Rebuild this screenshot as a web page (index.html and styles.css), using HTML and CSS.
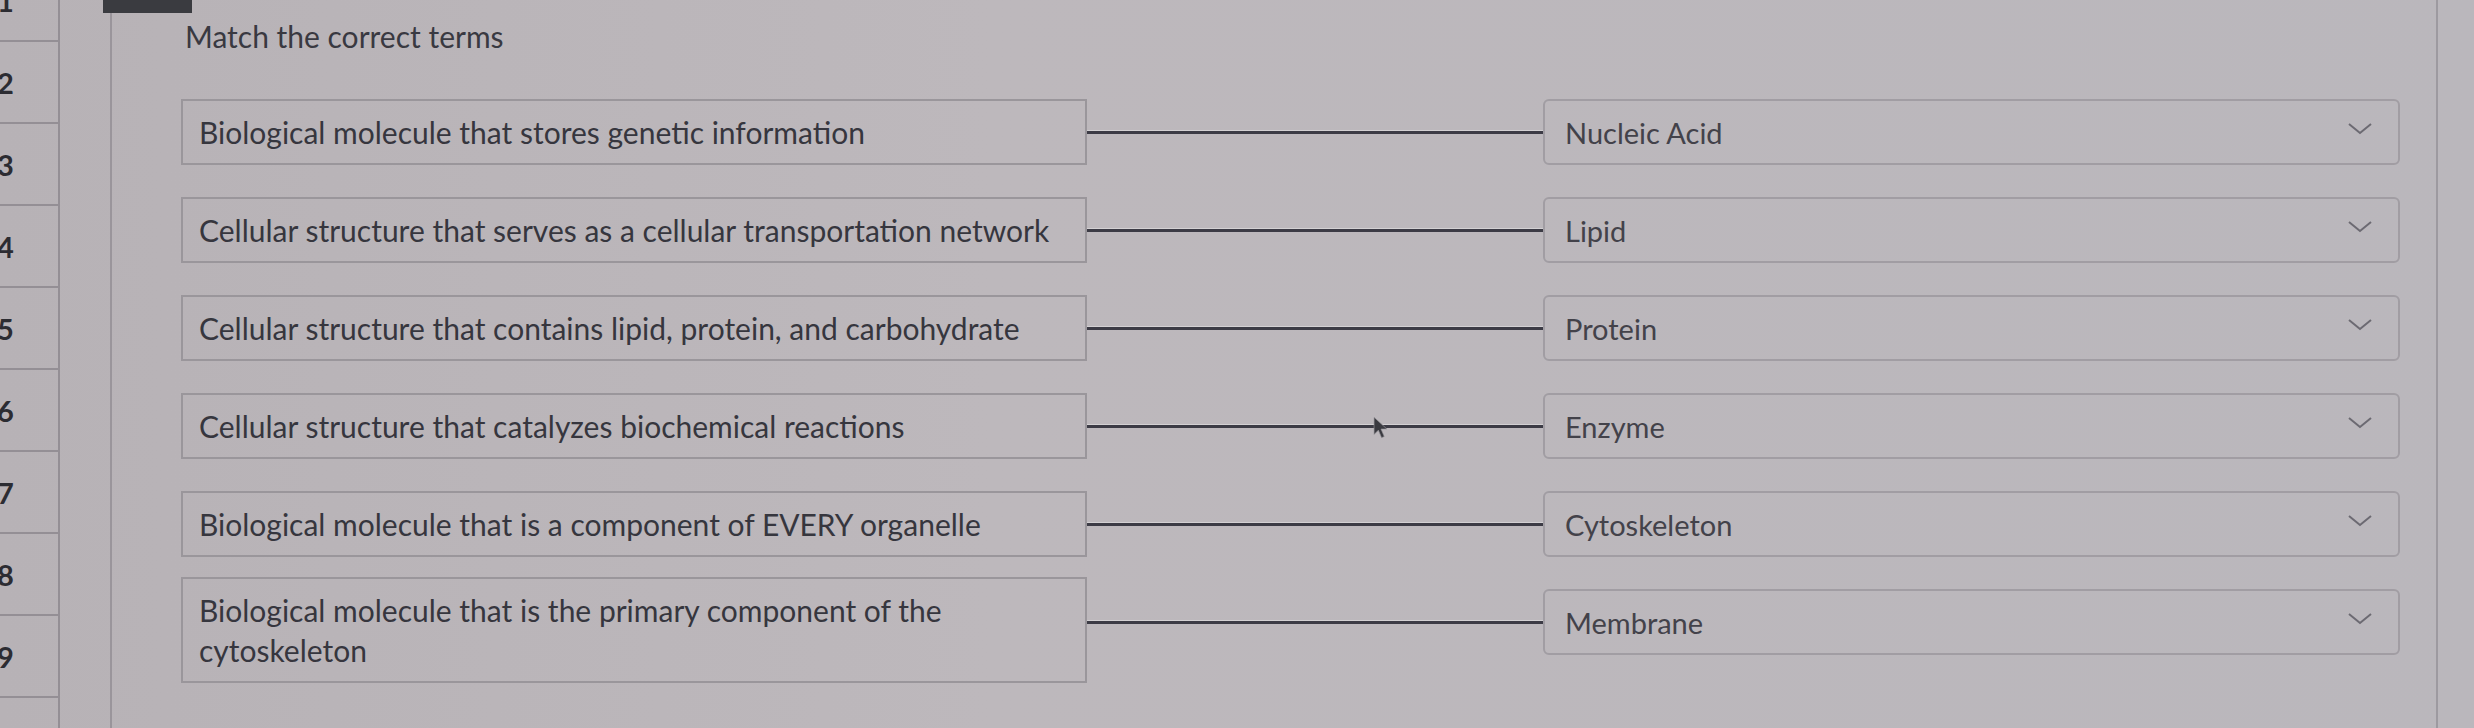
FILE: index.html
```html
<!DOCTYPE html>
<html lang="en">
<head>
    <meta charset="UTF-8">
    <meta name="viewport" content="width=device-width, initial-scale=1.0">
    <title>Match the correct terms</title>
    <link rel="stylesheet" href="styles.css">
</head>
<body>
    <div class="page">
        <!-- question navigator -->
        <div class="qnav">
            <div class="qnav-item">1</div>
            <div class="qnav-item">2</div>
            <div class="qnav-item">3</div>
            <div class="qnav-item">4</div>
            <div class="qnav-item">5</div>
            <div class="qnav-item">6</div>
            <div class="qnav-item">7</div>
            <div class="qnav-item">8</div>
            <div class="qnav-item">9</div>
            <div class="qnav-item"></div>
        </div>
        <div class="gutter"></div>

        <div class="panel">
            <div class="tab-bar"></div>
            <div class="question-title">Match the correct terms</div>

            <div class="match-list">
                <div class="match-row">
                    <div class="prompt">Biological molecule that stores genetic information</div>
                    <div class="connector"></div>
                    <div class="answer">
                        <span>Nucleic Acid</span>
                        <svg class="chevron" viewBox="0 0 24 12"><path d="M1 1 L12 10 L23 1"/></svg>
                    </div>
                </div>
                <div class="match-row">
                    <div class="prompt">Cellular structure that serves as a cellular transportation network</div>
                    <div class="connector"></div>
                    <div class="answer">
                        <span>Lipid</span>
                        <svg class="chevron" viewBox="0 0 24 12"><path d="M1 1 L12 10 L23 1"/></svg>
                    </div>
                </div>
                <div class="match-row">
                    <div class="prompt">Cellular structure that contains lipid, protein, and carbohydrate</div>
                    <div class="connector"></div>
                    <div class="answer">
                        <span>Protein</span>
                        <svg class="chevron" viewBox="0 0 24 12"><path d="M1 1 L12 10 L23 1"/></svg>
                    </div>
                </div>
                <div class="match-row">
                    <div class="prompt">Cellular structure that catalyzes biochemical reactions</div>
                    <div class="connector"></div>
                    <div class="answer">
                        <span>Enzyme</span>
                        <svg class="chevron" viewBox="0 0 24 12"><path d="M1 1 L12 10 L23 1"/></svg>
                    </div>
                </div>
                <div class="match-row">
                    <div class="prompt">Biological molecule that is a component of EVERY organelle</div>
                    <div class="connector"></div>
                    <div class="answer">
                        <span>Cytoskeleton</span>
                        <svg class="chevron" viewBox="0 0 24 12"><path d="M1 1 L12 10 L23 1"/></svg>
                    </div>
                </div>
                <div class="match-row">
                    <div class="prompt">Biological molecule that is the primary component of the cytoskeleton</div>
                    <div class="connector"></div>
                    <div class="answer">
                        <span>Membrane</span>
                        <svg class="chevron" viewBox="0 0 24 12"><path d="M1 1 L12 10 L23 1"/></svg>
                    </div>
                </div>
            </div>

            <!-- mouse pointer -->
            <svg class="pointer" viewBox="0 0 14 22"><path d="M1 1 L1 17 L5 13 L8 20 L10.5 19 L7.5 12 L13 12 Z"/></svg>
        </div>
    </div>
</body>
</html>
```

FILE: styles.css
```css
body {
    margin: 0;
    width: 2474px;
    height: 728px;
    overflow: hidden;
    font-family: Lato, "Open Sans", sans-serif;
    background: linear-gradient(90deg, #b7b2b6 0%, #bdb8bc 40%, #bab7bc 100%);
    color: #36363e;
}
.page {
    display: flex;
    height: 728px;
    overflow: hidden;
}
.qnav {
    width: 58px;
    flex-shrink: 0;
    margin-top: -40px;
    border-right: 2px solid #948f95;
}
.qnav-item {
    height: 80px;
    border-bottom: 2px solid #948f95;
    display: flex;
    align-items: center;
    margin-left: -3px;
    font-size: 29px;
    font-weight: 700;
    color: #2c2c32;
}
.gutter {
    width: 50px;
    flex-shrink: 0;
}
.panel {
    position: relative;
    flex: 1;
    border-left: 2px solid #9a959b;
    border-right: 2px solid #9d9aa0;
    margin-right: 36px;
}
.tab-bar {
    width: 89px;
    height: 13px;
    margin-left: -9px;
    background: #3a3b40;
}
.question-title {
    margin-left: 73px;
    margin-top: 6px;
    font-size: 30px;
    line-height: 34px;
    color: #393941;
}
.match-list {
    display: flex;
    flex-direction: column;
    gap: 32px;
    margin-top: 46px;
    padding-left: 69px;
    padding-right: 36px;
}
.match-row {
    display: flex;
    align-items: center;
    height: 66px;
}
.prompt {
    width: 906px;
    flex-shrink: 0;
    box-sizing: border-box;
    padding: 11px 30px 11px 16px;
    border: 2px solid #9a969b;
    font-size: 30px;
    line-height: 40px;
}
/* the two-line prompt sits a little lower than its dropdown */
.match-row:last-child .prompt {
    margin-top: 16px;
}
.connector {
    flex: 1;
    height: 3px;
    background: #3c3b45;
    box-shadow: 0 -1px 0 rgba(255, 255, 255, 0.35);
}
.answer {
    width: 857px;
    height: 66px;
    flex-shrink: 0;
    box-sizing: border-box;
    display: flex;
    align-items: center;
    justify-content: space-between;
    padding: 0 26px 0 20px;
    border: 2px solid #a19da3;
    border-radius: 6px;
    font-size: 29px;
    color: #43424a;
}
.chevron {
    width: 24px;
    height: 12px;
    margin-top: -6px;
    fill: none;
    stroke: #6c6a72;
    stroke-width: 2;
}
.pointer {
    position: absolute;
    left: 1261px;
    top: 416px;
    width: 15px;
    height: 24px;
    fill: #3a3a40;
    stroke: #9a979c;
    stroke-width: 0.6;
}
```
